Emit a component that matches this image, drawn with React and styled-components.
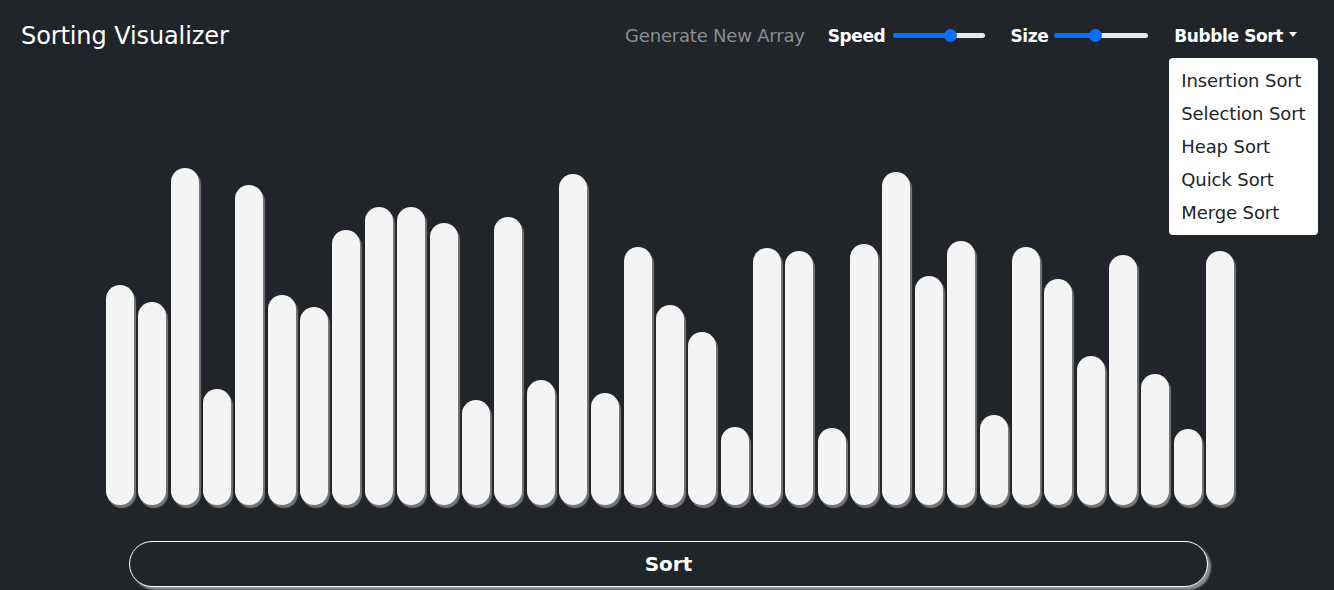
import React, { useState } from "react";
import styled, { createGlobalStyle } from "styled-components";

const Global = createGlobalStyle`
  html, body { margin: 0; padding: 0; background: #212529; }
  body { font-family: "DejaVu Sans", "Open Sans", sans-serif; color: #fff; overflow: hidden; }
  * { box-sizing: border-box; }
`;

const Page = styled.div`
  width: 1334px;
  height: 590px;
  background: #212529;
  display: flex;
  flex-direction: column;
`;

const Header = styled.header`
  height: 70px;
  padding: 1px 37px 0 21px;
  display: flex;
  align-items: center;
  justify-content: space-between;
`;

const Brand = styled.div`
  font-size: 24px;
  font-weight: 500;
  color: #fff;
  letter-spacing: -0.1px;
`;

const Nav = styled.nav`
  display: flex;
  align-items: center;
`;

const NavLink = styled.a`
  font-size: 18px;
  color: #8c8d8f;
  text-decoration: none;
  letter-spacing: -0.2px;
  margin-right: 23px;
  cursor: pointer;
`;

const Control = styled.div`
  display: flex;
  align-items: center;
  gap: ${(p) => p.$gap}px;
  margin-right: ${(p) => p.$after}px;
`;

const Label = styled.span`
  font-size: 17px;
  font-weight: 700;
  color: #fff;
  letter-spacing: -0.4px;
`;

const Range = styled.input.attrs({ type: "range" })`
  -webkit-appearance: none;
  appearance: none;
  width: ${(p) => p.$w}px;
  height: 5px;
  margin: 0;
  border-radius: 3px;
  outline: none;
  background: linear-gradient(
    to right,
    #0b6ffd 0,
    #0b6ffd var(--pct),
    #e9e9e9 var(--pct),
    #e9e9e9 100%
  );
  &::-webkit-slider-thumb {
    -webkit-appearance: none;
    appearance: none;
    width: 13px;
    height: 13px;
    border-radius: 50%;
    background: #0b6ffd;
    border: none;
  }
`;

const DropWrap = styled.div`
  position: relative;
  padding-left: 5px;
`;

const Toggle = styled.button`
  background: none;
  border: none;
  padding: 0;
  display: flex;
  align-items: center;
  gap: 6px;
  font-family: inherit;
  font-size: 17px;
  font-weight: 700;
  color: #fff;
  letter-spacing: -0.4px;
  cursor: pointer;
`;

const Caret = styled.span`
  display: inline-block;
  width: 0;
  height: 0;
  border-left: 4px solid transparent;
  border-right: 4px solid transparent;
  border-top: 5px solid #fff;
  margin-top: -2px;
`;

const Menu = styled.ul`
  position: absolute;
  top: 32px;
  left: 0;
  width: 149px;
  margin: 0;
  padding: 6px 0;
  list-style: none;
  background: #fff;
  border-radius: 4px;
  z-index: 10;
`;

const Item = styled.li`
  height: 33px;
  line-height: 33px;
  padding: 0 12px;
  font-size: 18px;
  color: #212529;
  white-space: nowrap;
  letter-spacing: -0.1px;
  cursor: pointer;
`;

const Main = styled.main`
  display: flex;
  flex-direction: column;
`;

const Bars = styled.div`
  margin-left: 106px;
  width: 1128px;
  height: 435px;
  display: grid;
  grid-template-columns: repeat(${(p) => p.$n}, 1fr);
  column-gap: 4.4px;
  align-items: end;
`;

const Bar = styled.div`
  background: #f4f4f4;
  border-radius: 14px;
  box-shadow: 2px 3px 1px #767676;
`;

const SortButton = styled.button`
  margin: 36px 0 0 129px;
  width: 1079px;
  height: 46px;
  border: 1.5px solid #fff;
  border-radius: 23px;
  background: #212529;
  box-shadow: 3px 3px 2px #8e8e8e;
  color: #fff;
  font-family: inherit;
  font-size: 20px;
  font-weight: 600;
  cursor: pointer;
`;

const HEIGHTS = [
  220, 203, 337, 116, 320, 210, 198, 275, 298, 298, 282, 105, 288, 125, 331,
  112, 258, 200, 173, 78, 257, 254, 77, 261, 333, 229, 264, 90, 258, 226, 149,
  250, 131, 76, 254,
];

const ALGOS = [
  "Insertion Sort",
  "Selection Sort",
  "Heap Sort",
  "Quick Sort",
  "Merge Sort",
];

function Slider({ width, initial }) {
  const [v, setV] = useState(initial);
  const thumb = 6.5 + ((width - 13) * v) / 100;
  const pct = (thumb / width) * 100;
  return (
    <Range
      $w={width}
      min={0}
      max={100}
      value={v}
      onChange={(e) => setV(Number(e.target.value))}
      style={{ "--pct": `${pct}%` }}
    />
  );
}

export default function App() {
  return (
    <>
      <Global />
      <Page>
        <Header>
          <Brand>Sorting Visualizer</Brand>
          <Nav>
            <NavLink>Generate New Array</NavLink>
            <Control $gap={8} $after={25}>
              <Label>Speed</Label>
              <Slider width={92} initial={64} />
            </Control>
            <Control $gap={6} $after={21}>
              <Label>Size</Label>
              <Slider width={94} initial={43} />
            </Control>
            <DropWrap>
              <Toggle>
                Bubble Sort
                <Caret />
              </Toggle>
              <Menu>
                {ALGOS.map((a) => (
                  <Item key={a}>{a}</Item>
                ))}
              </Menu>
            </DropWrap>
          </Nav>
        </Header>
        <Main>
          <Bars $n={HEIGHTS.length}>
            {HEIGHTS.map((h, i) => (
              <Bar key={i} style={{ height: h }} />
            ))}
          </Bars>
          <SortButton>Sort</SortButton>
        </Main>
      </Page>
    </>
  );
}
